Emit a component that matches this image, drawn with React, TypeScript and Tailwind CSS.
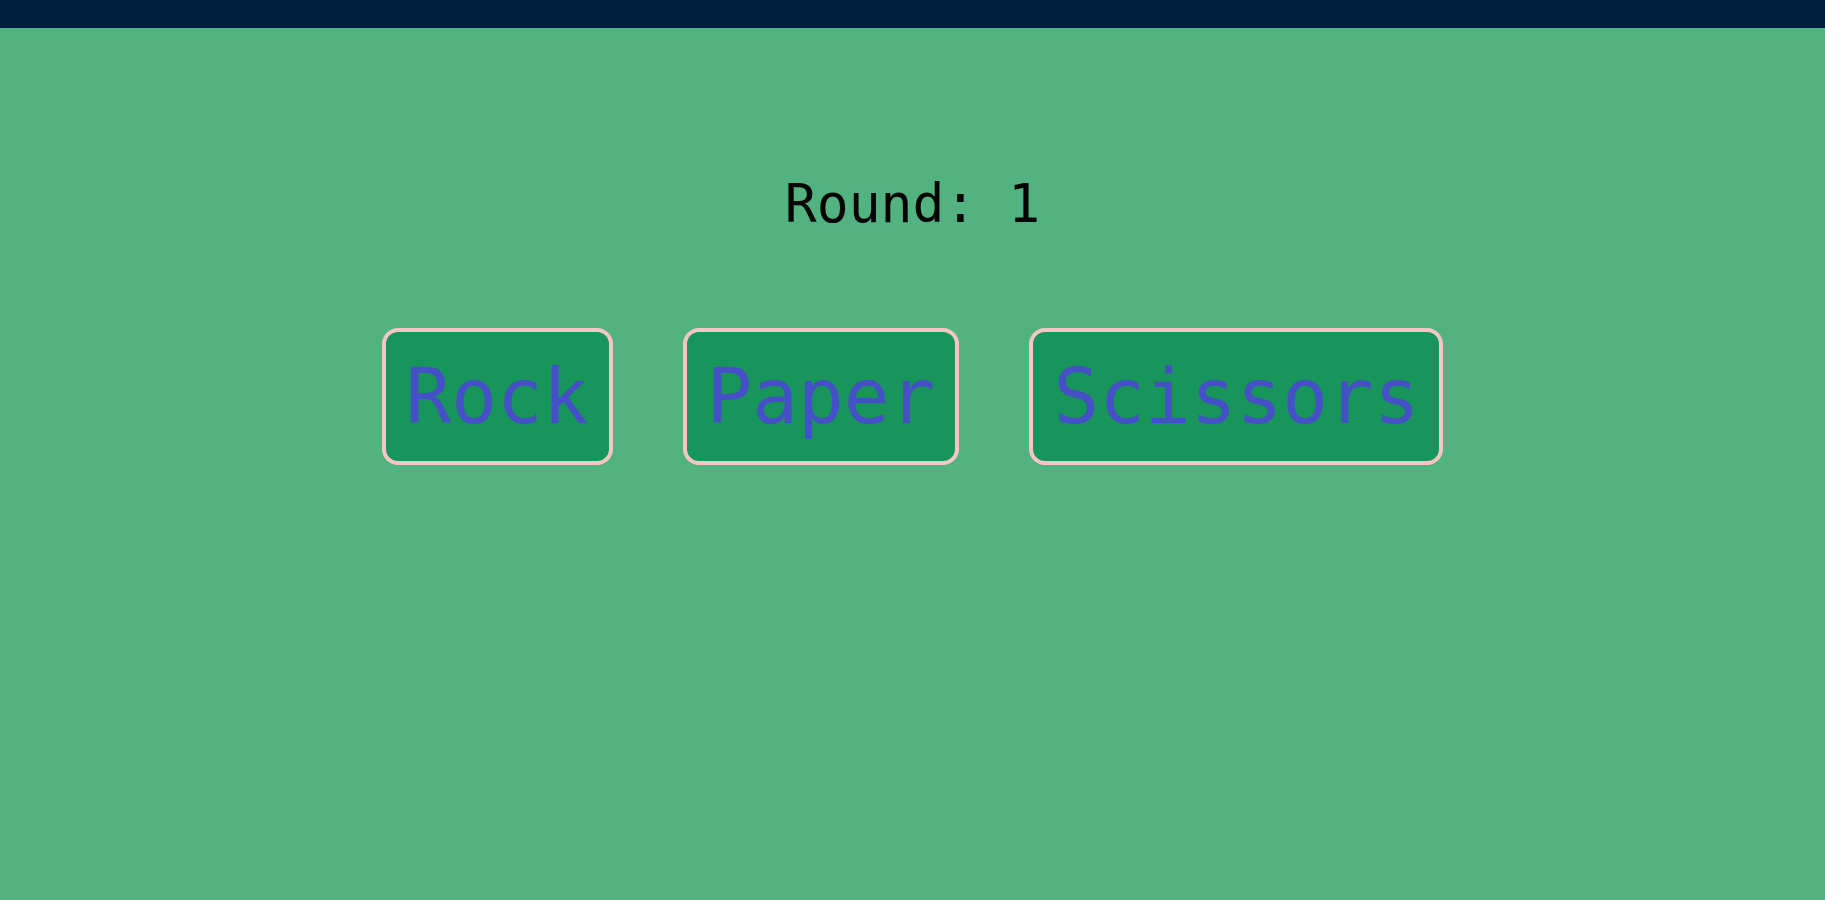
export default function App() {
  const mono = { fontFamily: '"DejaVu Sans Mono", monospace' };
  return (
    <div className="w-full h-[900px] bg-[#52b380] flex flex-col" style={mono}>
      <div className="h-[28px] bg-[#001f3f] shrink-0" />
      <div className="flex flex-col items-center pt-[149px]">
        <div className="text-[53px] leading-none text-[#050505]">Round: 1</div>
        <div className="flex gap-[70px] mt-[98px]">
          {["Rock", "Paper", "Scissors"].map((t) => (
            <button
              key={t}
              className="bg-[#17955a] border-4 border-[#f7c6c4] rounded-[16px] px-[20px] py-[20px] text-[76px] text-[#4550c6]"
              style={{ ...mono, lineHeight: "normal" }}
            >
              {t}
            </button>
          ))}
        </div>
      </div>
    </div>
  );
}
